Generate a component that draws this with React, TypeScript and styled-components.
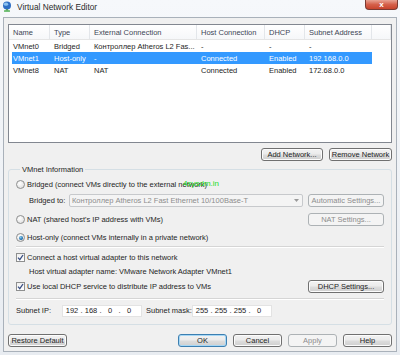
import React from "react";
import styled, { createGlobalStyle, css } from "styled-components";

const Global = createGlobalStyle`
  html, body { margin: 0; padding: 0; background: #eef1f5; }
  body {
    font-family: "Liberation Sans", Arial, sans-serif;
    font-size: 7.5px;
    color: #1e1e1e;
  }
  * { box-sizing: border-box; }
`;

const Window = styled.div`
  position: relative;
  width: 400px;
  height: 355px;
  display: flex;
  flex-direction: column;
  background: linear-gradient(#f6f8fb, #e8ecf1);
  overflow: hidden;
`;

const TitleBar = styled.div`
  height: 17px;
  display: flex;
  align-items: flex-start;
  flex-shrink: 0;
`;

const TitleIcon = styled.svg`
  margin: 1px 0 0 2px;
  width: 10px;
  height: 11px;
`;

const TitleText = styled.span`
  margin-left: 5px;
  line-height: 14px;
  font-size: 8.3px;
  color: #2a2a2a;
`;

const CloseButton = styled.div`
  margin-left: auto;
  margin-right: 2px;
  width: 33px;
  height: 10px;
  border: 1px solid #7a3a32;
  border-top: none;
  border-radius: 0 0 4px 4px;
  background: linear-gradient(#e8a393, #d5604a 50%, #c8442c);
  display: flex;
  align-items: center;
  justify-content: center;
  color: #fff;
  font-size: 8px;
  font-weight: bold;
  line-height: 8px;
`;

const Client = styled.div`
  flex: 1;
  margin: 0 3px 3px 3px;
  border: 1px solid #a9b1ba;
  background: #f0f0f0;
  padding: 6px 4px 0 4px;
  display: flex;
  flex-direction: column;
`;

const List = styled.div`
  height: 119px;
  border: 1px solid #828790;
  background: #fff;
  display: flex;
  flex-direction: column;
`;

const cols = css`
  display: grid;
  grid-template-columns: 41px 40px 107px 68px 40px 67px 1fr;
`;

const Header = styled.div`
  ${cols};
  height: 15px;
  border-bottom: 1px solid #e5e5e5;
  background: linear-gradient(#ffffff, #f6f7f9);
`;

const HeaderCell = styled.div`
  padding-left: 4px;
  border-right: 1px solid #e3e6ea;
  display: flex;
  align-items: center;
  color: #3d4656;
  white-space: nowrap;
  overflow: hidden;
`;

const Row = styled.div<{ $selected?: boolean }>`
  display: grid;
  grid-template-columns: 38px 40px 107px 68px 40px 67px;
  margin-left: 3px;
  width: 360px;
  height: 12px;
  background: ${(p) => (p.$selected ? "#3399ff" : "transparent")};
  color: ${(p) => (p.$selected ? "#fff" : "#1e1e1e")};
`;

const Cell = styled.div<{ $first?: boolean }>`
  padding-left: ${(p) => (p.$first ? "1px" : "4px")};
  display: flex;
  align-items: center;
  white-space: nowrap;
  overflow: hidden;
`;

const ButtonRow = styled.div`
  display: flex;
  justify-content: flex-end;
  gap: 6px;
  margin-top: 5px;
`;

const Button = styled.button<{ $w: number; $default?: boolean }>`
  width: ${(p) => p.$w}px;
  height: 13px;
  padding: 0;
  font-family: inherit;
  font-size: 7.5px;
  color: #1e1e1e;
  border: 1px solid ${(p) => (p.$default ? "#3c7fb1" : "#707070")};
  border-radius: 3px;
  background: linear-gradient(#f2f2f2 0%, #ebebeb 48%, #dddddd 52%, #cfcfcf 100%);
  box-shadow: inset 0 0 0 1px ${(p) => (p.$default ? "#a6d7f5" : "#fcfcfc")};
  display: flex;
  align-items: center;
  justify-content: center;
  white-space: nowrap;
  flex-shrink: 0;
  &:disabled {
    color: #8d8d8d;
    border-color: #adb2b5;
    background: #f4f4f4;
    box-shadow: none;
  }
`;

const Group = styled.fieldset`
  margin: 4px 0 0 0;
  padding: 4px 7px 7px 7px;
  border: 1px solid #d5dfe5;
  border-radius: 3px;
  min-width: 0;
  display: flex;
  flex-direction: column;
`;

const Legend = styled.legend`
  margin-left: 4px;
  padding: 0 2px;
  line-height: 9px;
  font-size: 7.5px;
`;

const OptionRow = styled.div<{ $mt?: number; $indent?: number }>`
  display: flex;
  align-items: center;
  height: 13px;
  margin-top: ${(p) => p.$mt ?? 0}px;
  padding-left: ${(p) => p.$indent ?? 0}px;
  white-space: nowrap;
`;

const Radio = styled.span<{ $checked?: boolean }>`
  position: relative;
  width: 9px;
  height: 9px;
  border-radius: 50%;
  border: 1px solid #8e8f8f;
  background: radial-gradient(circle at 40% 35%, #ffffff, #d9d9d9);
  margin-right: 2px;
  flex-shrink: 0;
  ${(p) =>
    p.$checked &&
    css`
      &::after {
        content: "";
        position: absolute;
        left: 1.5px;
        top: 1.5px;
        width: 4px;
        height: 4px;
        border-radius: 50%;
        background: radial-gradient(circle at 40% 35%, #8fd0f0, #1b6fb0 60%, #0f3f6e);
      }
    `}
`;

const CheckBox = styled.span`
  width: 9px;
  height: 9px;
  border: 1px solid #8e8f8f;
  background: linear-gradient(#f0f0f0, #ffffff);
  margin-right: 2px;
  flex-shrink: 0;
  display: flex;
  align-items: center;
  justify-content: center;
`;

const Label = styled.span<{ $w?: number }>`
  width: ${(p) => (p.$w ? `${p.$w}px` : "auto")};
  flex-shrink: 0;
`;

const Spacer = styled.div`
  flex: 1;
`;

const Combo = styled.div`
  width: 234px;
  height: 13px;
  border: 1px solid #c7c9cc;
  border-radius: 2px;
  background: #f4f4f4;
  color: #8d8d8d;
  display: flex;
  align-items: center;
  padding-left: 2px;
  padding-right: 3px;
  overflow: hidden;
  white-space: nowrap;
`;

const ComboText = styled.span`
  flex: 1;
  overflow: hidden;
`;

const Separator = styled.div<{ $mt: number }>`
  margin-top: ${(p) => p.$mt}px;
  height: 2px;
  border-top: 1px solid #d5d5d5;
  border-bottom: 1px solid #ffffff;
`;

const IpBox = styled.div`
  width: 80px;
  height: 12px;
  border: 1px solid #e3e3e3;
  background: #fff;
  display: flex;
  align-items: center;
  padding-left: 1px;
  flex-shrink: 0;
`;

const IpField = styled.span`
  width: 16px;
  text-align: center;
`;

const IpDot = styled.span`
  width: 3px;
  text-align: center;
`;

const BottomRow = styled.div`
  display: flex;
  align-items: center;
  gap: 6px;
  margin-top: 9px;
`;

const Watermark = styled.div`
  position: absolute;
  left: 183px;
  top: 179px;
  color: #22dd22;
  font-size: 8px;
  pointer-events: none;
`;

function Ip({ parts }: { parts: string[] }) {
  return (
    <IpBox>
      {parts.map((p, i) => (
        <React.Fragment key={i}>
          <IpField>{p}</IpField>
          {i < parts.length - 1 && <IpDot>.</IpDot>}
        </React.Fragment>
      ))}
    </IpBox>
  );
}

const Check = () => (
  <svg width="7" height="7" viewBox="0 0 7 7">
    <path d="M1 3.6 L2.8 5.6 L6 1" fill="none" stroke="#3a4f84" strokeWidth="1.3" />
  </svg>
);

const rows = [
  ["VMnet0", "Bridged", "Контроллер Atheros L2 Fas...", "-", "-", "-"],
  ["VMnet1", "Host-only", "-", "Connected", "Enabled", "192.168.0.0"],
  ["VMnet8", "NAT", "NAT", "Connected", "Enabled", "172.68.0.0"],
];

export default function App() {
  return (
    <>
      <Global />
      <Window>
        <TitleBar>
          <TitleIcon viewBox="0 0 10 11">
            <circle cx="5" cy="4.5" r="4" fill="#2f6fc4" />
            <ellipse cx="4" cy="3.2" rx="2.2" ry="1.6" fill="#8cc2f0" />
            <rect x="4.3" y="8" width="1.4" height="1.5" fill="#3a8a3a" />
            <rect x="2" y="9.3" width="6" height="1.5" rx="0.5" fill="#4caf50" />
          </TitleIcon>
          <TitleText>Virtual Network Editor</TitleText>
          <CloseButton>x</CloseButton>
        </TitleBar>
        <Client>
          <List>
            <Header>
              <HeaderCell>Name</HeaderCell>
              <HeaderCell>Type</HeaderCell>
              <HeaderCell>External Connection</HeaderCell>
              <HeaderCell>Host Connection</HeaderCell>
              <HeaderCell>DHCP</HeaderCell>
              <HeaderCell>Subnet Address</HeaderCell>
              <HeaderCell />
            </Header>
            {rows.map((r, i) => (
              <Row key={r[0]} $selected={i === 1}>
                {r.map((c, j) => (
                  <Cell key={j} $first={j === 0}>
                    {c}
                  </Cell>
                ))}
              </Row>
            ))}
          </List>
          <ButtonRow>
            <Button $w={62}>Add Network...</Button>
            <Button $w={63}>Remove Network</Button>
          </ButtonRow>
          <Group>
            <Legend>VMnet Information</Legend>
            <OptionRow>
              <Radio />
              <Label>Bridged (connect VMs directly to the external network)</Label>
            </OptionRow>
            <OptionRow $mt={3} $indent={13}>
              <Label $w={40}>Bridged to:</Label>
              <Combo>
                <ComboText>Контроллер Atheros L2 Fast Ethernet 10/100Base-T</ComboText>
                <svg width="5" height="3" viewBox="0 0 5 3">
                  <path d="M0 0 H5 L2.5 3 Z" fill="#9a9a9a" />
                </svg>
              </Combo>
              <Spacer />
              <Button $w={76} disabled>
                Automatic Settings...
              </Button>
            </OptionRow>
            <OptionRow $mt={6}>
              <Radio />
              <Label>NAT (shared host's IP address with VMs)</Label>
              <Spacer />
              <Button $w={76} disabled>
                NAT Settings...
              </Button>
            </OptionRow>
            <OptionRow $mt={5}>
              <Radio $checked />
              <Label>Host-only (connect VMs internally in a private network)</Label>
            </OptionRow>
            <Separator $mt={2} />
            <OptionRow $mt={3}>
              <CheckBox>
                <Check />
              </CheckBox>
              <Label>Connect a host virtual adapter to this network</Label>
            </OptionRow>
            <OptionRow $mt={1} $indent={13}>
              <Label>Host virtual adapter name: VMware Network Adapter VMnet1</Label>
            </OptionRow>
            <OptionRow $mt={2}>
              <CheckBox>
                <Check />
              </CheckBox>
              <Label>Use local DHCP service to distribute IP address to VMs</Label>
              <Spacer />
              <Button $w={76}>DHCP Settings...</Button>
            </OptionRow>
            <Separator $mt={5} />
            <OptionRow $mt={4}>
              <Label $w={46}>Subnet IP:</Label>
              <Ip parts={["192", "168", "0", "0"]} />
              <Label $w={46} style={{ marginLeft: 4 }}>
                Subnet mask:
              </Label>
              <Ip parts={["255", "255", "255", "0"]} />
            </OptionRow>
          </Group>
          <BottomRow>
            <Button $w={59}>Restore Default</Button>
            <Spacer />
            <Button $w={49} $default>
              OK
            </Button>
            <Button $w={49}>Cancel</Button>
            <Button $w={49} disabled>
              Apply
            </Button>
            <Button $w={49}>Help</Button>
          </BottomRow>
        </Client>
        <Watermark>4sysdm.in</Watermark>
      </Window>
    </>
  );
}
